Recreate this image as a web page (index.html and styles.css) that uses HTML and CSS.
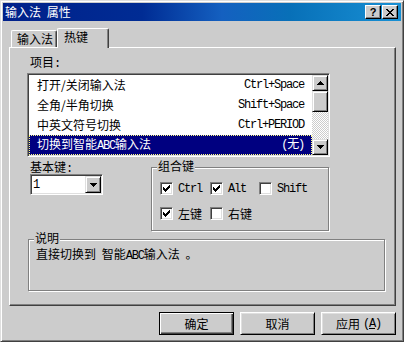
FILE: index.html
```html
<!DOCTYPE html>
<html lang="zh-CN">
<head>
    <meta charset="UTF-8">
    <title>输入法 属性</title>
    <link rel="stylesheet" href="styles.css">
</head>
<body>
<div class="window">
    <div class="titlebar">
        <span class="title">输入法 属性</span>
        <div class="title-btns">
            <span class="tbtn help">?</span>
            <span class="tbtn close">
                <svg width="8" height="7" viewBox="0 0 8 7"><path d="M0 0h2v1H0zM6 0h2v1H6zM1 1h2v1H1zM5 1h2v1H5zM2 2h4v1H2zM3 3h2v1H3zM2 4h4v1H2zM1 5h2v1H1zM5 5h2v1H5zM0 6h2v1H0zM6 6h2v1H6z"/></svg>
            </span>
        </div>
    </div>

    <div class="body">
        <div class="tabs">
            <div class="tab">输入法</div>
            <div class="tab active">热键</div>
        </div>

        <div class="panel">
            <div class="label">项目<span class="en">:</span></div>
            <div class="listbox">
                <ul class="items">
                    <li><span>打开/关闭输入法</span><span class="key">Ctrl+Space</span></li>
                    <li><span>全角/半角切换</span><span class="key">Shift+Space</span></li>
                    <li><span>中英文符号切换</span><span class="key">Ctrl+PERIOD</span></li>
                    <li class="selected"><span>切换到智能<span class="en">ABC</span>输入法</span><span class="key">(无)</span></li>
                </ul>
                <div class="vscroll">
                    <span class="sbtn"><svg width="7" height="4" viewBox="0 0 7 4"><path d="M3 0h1v1H3zM2 1h3v1H2zM1 2h5v1H1zM0 3h7v1H0z"/></svg></span>
                    <span class="thumb"></span>
                    <span class="track"></span>
                    <span class="sbtn"><svg width="7" height="4" viewBox="0 0 7 4"><path d="M0 0h7v1H0zM1 1h5v1H1zM2 2h3v1H2zM3 3h1v1H3z"/></svg></span>
                </div>
            </div>

            <div class="middle">
                <div class="basekey">
                    <div class="label">基本键<span class="en">:</span></div>
                    <div class="combo">
                        <span class="combo-value en">1</span>
                        <span class="combo-btn"><svg width="7" height="4" viewBox="0 0 7 4"><path d="M0 0h7v1H0zM1 1h5v1H1zM2 2h3v1H2zM3 3h1v1H3z"/></svg></span>
                    </div>
                </div>

                <div class="group modkeys">
                    <span class="group-title">组合键</span>
                    <div class="checks">
                        <div class="check"><span class="box"><svg width="7" height="7" viewBox="0 0 7 7"><path d="M0 2h1v3H0zM1 3h1v3H1zM2 4h1v3H2zM3 3h1v3H3zM4 2h1v3H4zM5 1h1v3H5zM6 0h1v3H6z"/></svg></span><span class="en">Ctrl</span></div>
                        <div class="check"><span class="box"><svg width="7" height="7" viewBox="0 0 7 7"><path d="M0 2h1v3H0zM1 3h1v3H1zM2 4h1v3H2zM3 3h1v3H3zM4 2h1v3H4zM5 1h1v3H5zM6 0h1v3H6z"/></svg></span><span class="en">Alt</span></div>
                        <div class="check"><span class="box"></span><span class="en">Shift</span></div>
                        <div class="check"><span class="box"><svg width="7" height="7" viewBox="0 0 7 7"><path d="M0 2h1v3H0zM1 3h1v3H1zM2 4h1v3H2zM3 3h1v3H3zM4 2h1v3H4zM5 1h1v3H5zM6 0h1v3H6z"/></svg></span><span>左键</span></div>
                        <div class="check"><span class="box"></span><span>右键</span></div>
                    </div>
                </div>
            </div>

            <div class="group desc">
                <span class="group-title">说明</span>
                <p>直接切换到 智能<span class="en">ABC</span>输入法 。</p>
            </div>
        </div>

        <div class="buttons">
            <span class="btn default">确定</span>
            <span class="btn">取消</span>
            <span class="btn">应用<span class="en">(<u>A</u>)</span></span>
        </div>
    </div>
</div>
</body>
</html>
```

FILE: styles.css
```css
* {
    margin: 0;
    padding: 0;
    box-sizing: border-box;
}

body {
    background: #cccccc;
    font-family: "Noto Sans CJK SC", sans-serif;
    font-size: 12px;
    line-height: 12px;
    word-spacing: 3px;
    color: #000;
}

.en,
.key {
    font-family: "Liberation Mono", "Noto Sans CJK SC", monospace;
    font-size: 12px;
    letter-spacing: -1.2px;
}

/* 窗口外框 */
.window {
    width: 404px;
    height: 342px;
    padding: 2px;
    border: 1px solid;
    border-color: #dfdfdf #404040 #404040 #dfdfdf;
    box-shadow: inset 1px 1px #fff, inset -1px -1px #808080;
}

.titlebar {
    display: flex;
    align-items: center;
    height: 18px;
    padding: 0 3px 0 2px;
    color: #fff;
    background: linear-gradient(to right, #00208a 0%, #002c94 35%, #1460c0 55%, #0870b8 72%, #1890d4 100%);
}

.title-btns {
    display: flex;
    gap: 1px;
    margin-left: auto;
}

.tbtn {
    display: flex;
    align-items: center;
    justify-content: center;
    width: 16px;
    height: 14px;
    color: #000;
    background: #cccccc;
    border: 1px solid;
    border-color: #fff #000 #000 #fff;
    box-shadow: inset -1px -1px #808080;
}

.tbtn.help {
    font: bold 11px/12px "Liberation Sans", sans-serif;
}

/* 选项卡 */
.body {
    padding: 7px 5px 0 6px;
}

.tabs {
    display: flex;
    align-items: flex-end;
    height: 19px;
    padding-left: 2px;
    position: relative;
    z-index: 1;
}

.tab {
    width: 46px;
    height: 17px;
    padding: 2px 0 0 5px;
    background: #cccccc;
    border: 1px solid;
    border-color: #fff #404040 transparent #fff;
    border-bottom: none;
    border-radius: 2px 2px 0 0;
    box-shadow: inset -1px 0 #808080;
}

.tab.active {
    width: 52px;
    height: 20px;
    margin-bottom: -1px;
    padding-left: 6px;
}

.panel {
    width: 387px;
    height: 259px;
    padding: 8px 0 0 17px;
    border: 1px solid;
    border-color: #fff #404040 #404040 #fff;
    box-shadow: inset -1px -1px #808080;
}

.label {
    margin-left: 3px;
    height: 12px;
}

/* 列表框 */
.listbox {
    display: flex;
    width: 303px;
    height: 84px;
    margin-top: 5px;
    padding: 1px;
    background: #fff;
    border: 1px solid;
    border-color: #808080 #fff #fff #808080;
    box-shadow: inset 1px 1px #404040, inset -1px -1px #dfdfdf;
}

.items {
    flex: 1;
    list-style: none;
}

.items li {
    display: flex;
    justify-content: space-between;
    align-items: center;
    height: 20px;
    padding: 0 8px;
}

.items li.selected {
    color: #fff;
    background: #000080;
    border: 1px dotted #ffff80;
    padding: 0 7px;
}

.vscroll {
    display: flex;
    flex-direction: column;
    width: 16px;
}

.sbtn,
.thumb,
.combo-btn {
    display: flex;
    align-items: center;
    justify-content: center;
    height: 16px;
    background: #cccccc;
    border: 1px solid;
    border-color: #dfdfdf #000 #000 #dfdfdf;
    box-shadow: inset 1px 1px #fff, inset -1px -1px #808080;
}

.thumb {
    height: 21px;
}

.track {
    flex: 1;
    background: repeating-conic-gradient(#fff 0 25%, #cccccc 0 50%) 0 0 / 2px 2px;
}

/* 基本键与组合键 */
.middle {
    display: flex;
    margin-top: 4px;
}

.basekey {
    width: 124px;
    padding-left: 3px;
}

.basekey .label {
    margin-left: 0;
}

.combo {
    display: flex;
    align-items: center;
    width: 73px;
    height: 21px;
    margin-top: 1px;
    padding: 1px;
    background: #fff;
    border: 1px solid;
    border-color: #808080 #fff #fff #808080;
    box-shadow: inset 1px 1px #404040, inset -1px -1px #dfdfdf;
}

.combo-value {
    flex: 1;
    padding-left: 1px;
}

.combo-btn {
    width: 16px;
    height: 17px;
}

.group {
    position: relative;
    border: 1px solid #808080;
    box-shadow: 1px 1px #fff, inset 1px 1px #fff;
}

.group-title {
    position: absolute;
    top: -8px;
    left: 5px;
    padding: 0 1px;
    background: #cccccc;
}

.modkeys {
    width: 178px;
    height: 64px;
    margin-top: 6px;
    padding: 14px 0 0 8px;
}

.checks {
    display: grid;
    grid-template-columns: 50px 49px auto;
    row-gap: 12px;
}

.check {
    display: flex;
    align-items: center;
    gap: 5px;
    height: 13px;
}

.box {
    width: 13px;
    height: 13px;
    padding: 2px;
    background: #fff;
    border: 1px solid;
    border-color: #808080 #fff #fff #808080;
    box-shadow: inset 1px 1px #404040, inset -1px -1px #dfdfdf;
}

.box svg {
    display: block;
}

/* 说明 */
.desc {
    width: 357px;
    height: 52px;
    margin: 8px 0 0 1px;
    padding: 8px 0 0 7px;
}

/* 按钮 */
.buttons {
    display: flex;
    justify-content: flex-end;
    gap: 6px;
    width: 387px;
    margin-top: 6px;
}

.btn {
    display: flex;
    align-items: center;
    justify-content: center;
    width: 75px;
    height: 23px;
    border: 1px solid;
    border-color: #fff #000 #000 #fff;
    box-shadow: inset 1px 1px #dfdfdf, inset -1px -1px #808080;
}

.btn.default {
    border-color: #000;
    box-shadow: inset 1px 1px #fff, inset -1px -1px #404040, inset -2px -2px #808080;
}

.btn .en {
    margin-left: 3px;
}
```
